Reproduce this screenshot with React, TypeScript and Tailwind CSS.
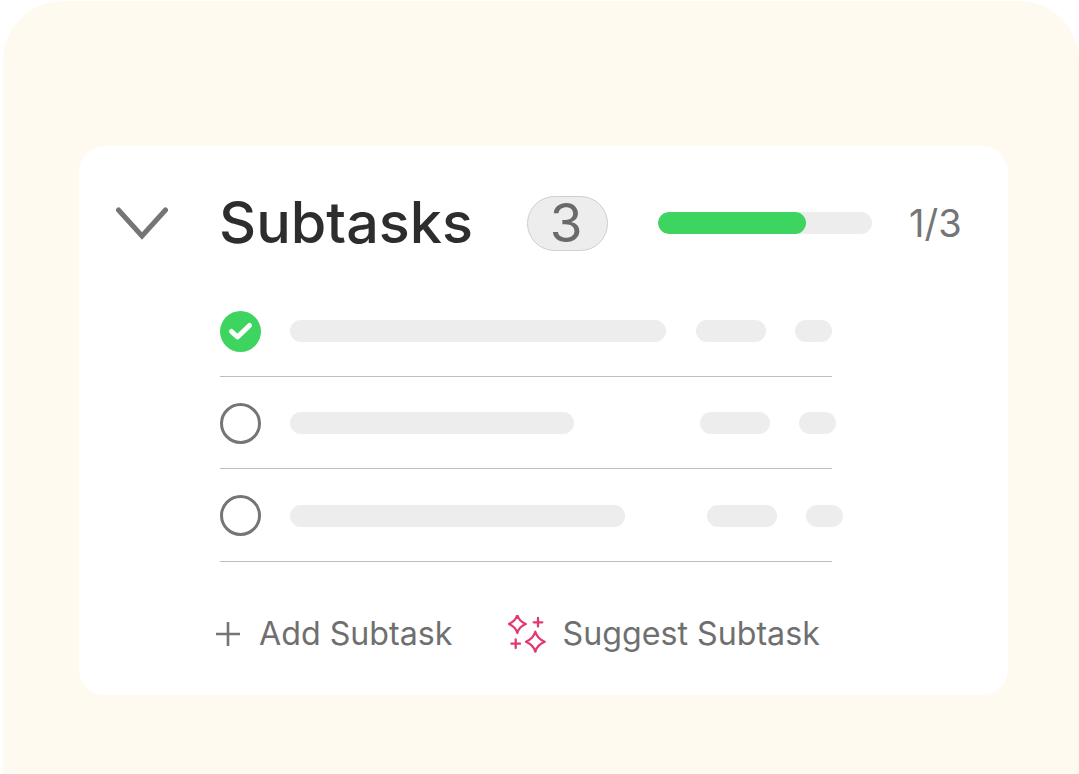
import React from "react";

const font = { fontFamily: "Inter, 'Liberation Sans', sans-serif" };

function Check() {
  return (
    <svg width="41" height="41" viewBox="0 0 41 41" className="shrink-0">
      <circle cx="20.5" cy="20.5" r="20.5" fill="#3dd560" />
      <path d="M11.5 20.5 L17.5 26 L29.5 14.5" fill="none" stroke="#fff" strokeWidth="5" strokeLinecap="round" strokeLinejoin="round" />
    </svg>
  );
}

function Ring() {
  return <div className="h-[41px] w-[41px] shrink-0 rounded-full border-[3.5px] border-[#757575]" />;
}

function Bars({ w1, gap1 }: { w1: string; gap1: string }) {
  return (
    <>
      <div className={`ml-[29px] h-[22px] ${w1} shrink-0 rounded-full bg-[#ededed]`} />
      <div className={`${gap1} h-[22px] w-[70px] shrink-0 rounded-full bg-[#ededed]`} />
      <div className="ml-[29px] h-[22px] w-[37px] shrink-0 rounded-full bg-[#ededed]" />
    </>
  );
}

function Sparkles() {
  const star = "M0 -9 C1.2 -4.6 3.6 -2 8.5 0 C3.6 2 1.2 4.6 0 9 C-1.2 4.6 -3.6 2 -8.5 0 C-3.6 -2 -1.2 -4.6 0 -9 Z";
  return (
    <svg width="38" height="38" viewBox="0 0 38 38" fill="none" stroke="#e23a70" strokeWidth="2.3" strokeLinecap="round" strokeLinejoin="round" className="shrink-0">
      <path d={star} transform="translate(9.3 9)" />
      <path d={star} transform="translate(27.3 26.7) scale(1.1)" strokeWidth="2.1" />
      <path d="M30 3 V11.6 M25.7 7.3 H34.3" />
      <path d="M7.7 24.4 V33 M3.4 28.7 H12" />
    </svg>
  );
}

export default function App() {
  return (
    <div className="h-[774px] w-[1079px] overflow-hidden bg-white pl-[3px] pt-[1px]" style={font}>
      <div className="h-[773px] w-[1076px] rounded-t-[60px] bg-[#fffaf0] pl-[76px] pt-[145px]">
        <div className="h-[549px] w-[929px] rounded-[26px] bg-white pl-[37px] pt-[49px]">
          <div className="flex h-[56px] items-center">
            <svg width="52" height="33" viewBox="0 0 52 33" fill="none" className="shrink-0">
              <path d="M2.5 3 L26 29 L49.5 3" stroke="#757575" strokeWidth="5" strokeLinecap="round" strokeLinejoin="miter" />
            </svg>
            <span className="ml-[51px] w-[308px] shrink-0 text-[57.5px] font-medium leading-none text-[#2d2d2d]">Subtasks</span>
            <div className="flex h-[55px] w-[81px] shrink-0 items-center justify-center rounded-full border border-[#cfcfcf] bg-[#ededed] pr-[3px] text-[53px] leading-none text-[#6a6a6a]">3</div>
            <div className="ml-[50px] h-[22px] w-[214px] shrink-0 overflow-hidden rounded-full bg-[#ededed]">
              <div className="h-full w-[148px] rounded-full bg-[#3dd560]" />
            </div>
            <span className="ml-[37px] text-[38px] leading-none text-[#757575]">1/3</span>
          </div>
          <div className="ml-[104px] mt-[34px] w-[612px]">
            <div className="flex h-[92px] items-center border-b border-[#bdbdbd] pt-[1px]">
              <Check />
              <Bars w1="w-[376px]" gap1="ml-[30px]" />
            </div>
            <div className="flex h-[92px] items-center border-b border-[#bdbdbd] pt-[1px]">
              <Ring />
              <Bars w1="w-[284px]" gap1="ml-[126px]" />
            </div>
            <div className="flex h-[93px] items-center border-b border-[#bdbdbd] pt-[1px]">
              <Ring />
              <Bars w1="w-[335px]" gap1="ml-[82px]" />
            </div>
          </div>
          <div className="ml-[100px] mt-[47px] flex h-[50px] items-center text-[32.2px] leading-none text-[#6f6f6f]">
            <svg width="24" height="24" viewBox="0 0 24 24" fill="none" stroke="#757575" strokeWidth="2.6" className="shrink-0">
              <path d="M12 0 V24 M0 12 H24" />
            </svg>
            <span className="ml-[19px]">Add Subtask</span>
            <div className="ml-[55px] flex items-center"><Sparkles /></div>
            <span className="ml-[17px]">Suggest Subtask</span>
          </div>
        </div>
      </div>
    </div>
  );
}
